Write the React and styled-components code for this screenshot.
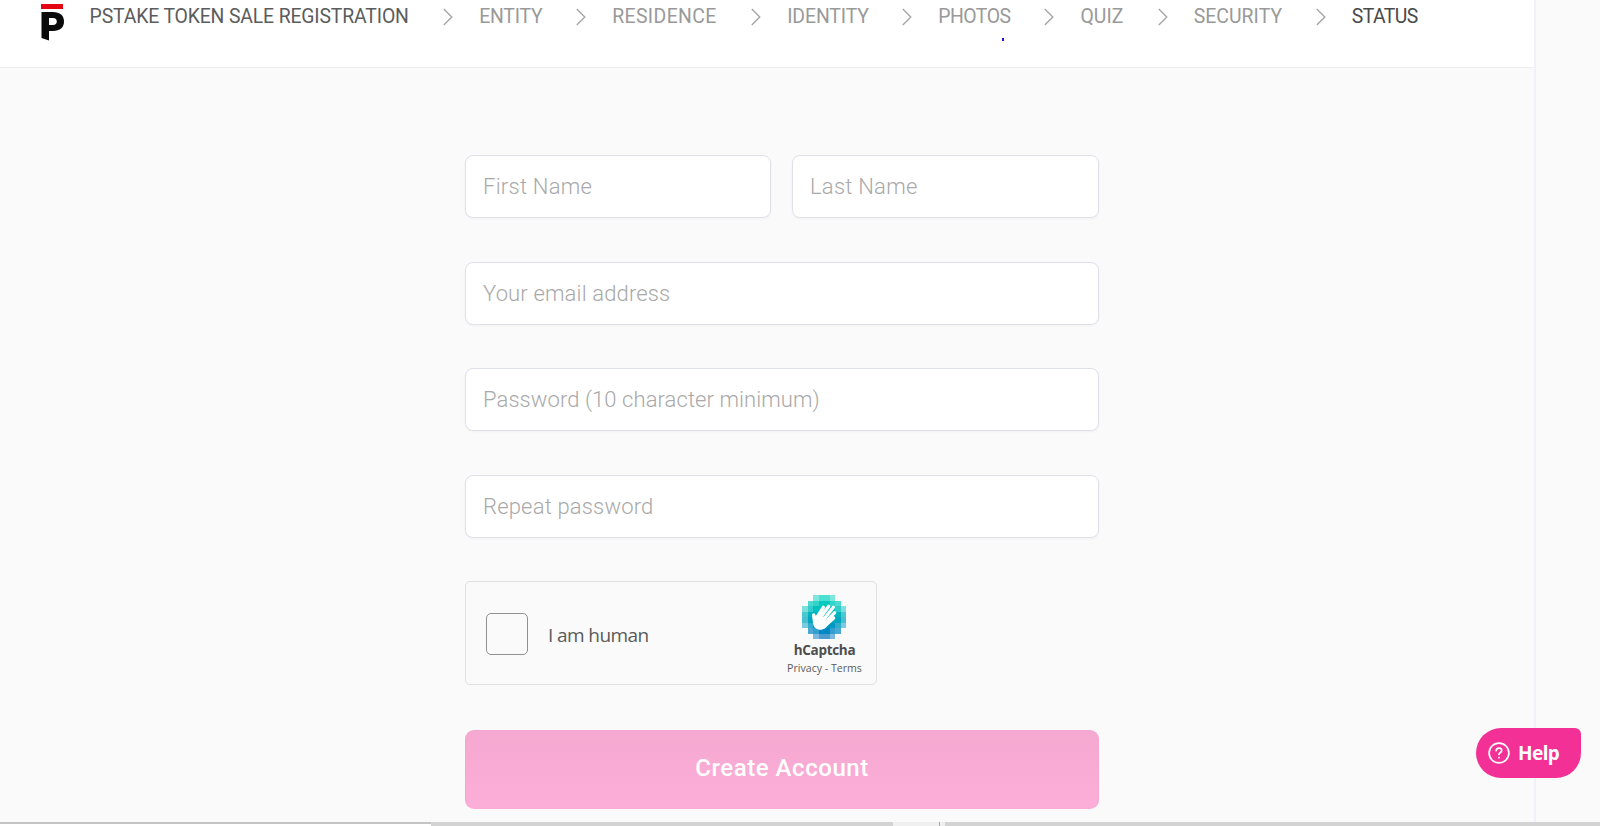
import styled, { createGlobalStyle } from 'styled-components'

const GlobalStyle = createGlobalStyle`
  * {
    box-sizing: border-box;
  }

  body {
    margin: 0;
    background-color: #fafafa;
    font-family: Roboto, 'Liberation Sans', sans-serif;
    overflow: hidden;
  }
`

const PageStyled = styled('div')`
  position: relative;
  display: flex;
  flex-direction: column;
  width: 1600px;
  height: 826px;
  overflow: hidden;
`

const ContentStyled = styled('div')`
  flex: 1;
  width: 1536px;
  min-height: 0;
  border-right: 2px solid #f1f1f9;
`

const HeaderStyled = styled('header')`
  position: relative;
  display: flex;
  align-items: flex-start;
  height: 68px;
  padding-left: 41px;
  background-color: #fff;
  border-bottom: 1px solid #eee;
`

const LogoStyled = styled('svg')`
  flex: none;
  width: 24px;
  height: 37px;
  margin: 4px 24.6px 0 0;
`

const StepListStyled = styled('ol')`
  display: flex;
  margin: 0;
  padding: 0;
  list-style: none;
`

const StepStyled = styled('li')`
  display: flex;
  align-items: center;
  height: 32px;
  width: ${({ $width }) => $width}px;
  color: ${({ $color }) => $color || '#999'};
  font-size: 19.4px;
  letter-spacing: ${({ $spacing }) => $spacing || 0}px;
  white-space: nowrap;

  & svg {
    flex: none;
    width: 10px;
    height: 18px;
    margin: 2px 26px 0 auto;
  }
`

const CursorDotStyled = styled('i')`
  position: absolute;
  left: 1002px;
  top: 38px;
  width: 2px;
  height: 3px;
  background-color: #2010e8;
`

const FormStyled = styled('form')`
  display: flex;
  flex-direction: column;
  width: 634px;
  margin: 87px 0 0 465px;
`

const RowStyled = styled('div')`
  display: flex;
  gap: 21px;
  margin-bottom: ${({ $gap }) => $gap || 43}px;
`

const InputStyled = styled('input')`
  flex: ${({ $width }) => ($width ? `0 0 ${$width}px` : 1)};
  min-width: 0;
  height: 63px;
  padding: 0 17px;
  border: 1px solid #dfe1ea;
  border-radius: 8px;
  background-color: #fff;
  box-shadow: 0 1px 3px rgba(0, 0, 0, 0.04);
  font-family: inherit;
  font-size: 22px;
  font-weight: 300;
  letter-spacing: ${({ $spacing }) => $spacing || 0.15}px;
  outline: none;

  &::placeholder {
    color: #a9a9a9;
    opacity: 1;
  }
`

const CaptchaStyled = styled('div')`
  display: flex;
  align-items: center;
  width: 412px;
  height: 104px;
  padding: 1px 13px 0 20px;
  border: 1px solid #e0e0e0;
  border-radius: 5px;
  background-color: #fafafa;
  color: #5a5a5a;
  font-family: 'Open Sans', 'Noto Sans', sans-serif;
`

const CheckboxStyled = styled('span')`
  width: 42px;
  height: 42px;
  margin-right: 20px;
  border: 1px solid #919191;
  border-radius: 5px;
`

const CaptchaLabelStyled = styled('span')`
  padding-top: 2px;
  font-size: 19px;
  letter-spacing: -0.6px;
`

const BrandStyled = styled('div')`
  display: flex;
  flex-direction: column;
  align-items: center;
  width: 77px;
  margin-left: auto;
  padding-top: 2px;

  & svg {
    width: 44px;
    height: 44px;
    margin-right: 1px;
  }

  & strong {
    color: #4d4d4d;
    font-size: 13.5px;
    line-height: 22px;
    letter-spacing: -0.3px;
  }

  & small {
    font-size: 10.6px;
    line-height: 14px;
    white-space: nowrap;
  }
`

const SubmitStyled = styled('button')`
  height: 79px;
  margin-top: 45px;
  padding: 0 0 3px;
  border: 1px solid #f4a6d0;
  border-bottom-color: #fbadd7;
  border-radius: 9px;
  background: linear-gradient(#f5a8d0, #fcaed8);
  color: #fff;
  font-family: inherit;
  font-size: 24px;
  font-weight: 500;
  letter-spacing: 0.55px;
`

const HelpStyled = styled('button')`
  position: absolute;
  left: 1476px;
  top: 728px;
  display: flex;
  align-items: center;
  gap: 8px;
  width: 105px;
  height: 50px;
  padding: 0 0 0 12px;
  border: 0;
  border-radius: 25px 6px 25px 25px;
  background-color: #f23096;
  color: #fff;
  font-family: 'Noto Sans', sans-serif;
  font-size: 19px;
  font-weight: 700;
  letter-spacing: -0.6px;
`

const ScrollbarStyled = styled('div')`
  display: flex;
  height: 4px;
  background-color: #d3d3d3;
`

const TrackStyled = styled('span')`
  width: ${({ $width }) => $width}px;
  border-top: ${({ $edge }) => ($edge ? `2px solid ${$edge}` : 0)};
  background-color: ${({ $color }) => $color};
`

const steps = [
  { name: 'PSTAKE TOKEN SALE REGISTRATION', width: 389.6, color: '#5c5c5c', spacing: -0.15 },
  { name: 'ENTITY', width: 133, spacing: -0.2 },
  { name: 'RESIDENCE', width: 175, spacing: 0.4 },
  { name: 'IDENTITY', width: 151, spacing: -0.1 },
  { name: 'PHOTOS', width: 142.3, spacing: -0.5 },
  { name: 'QUIZ', width: 113.2, spacing: 0 },
  { name: 'SECURITY', width: 158.2, spacing: 0.05 },
  { name: 'STATUS', width: 80, color: '#4a4a4a', spacing: -0.6 }
]

const Logo = () => (
  <LogoStyled viewBox='0 0 24 37'>
    <path d='M0 0h22v5H0z' fill='#e30613' />
    <path d='M.5 8H12C19 8 23 11.500 23 17.500S19 27 12 27H8v9.500L.5 34zM8 14v7h4c2.500 0 3.800-1.200 3.800-3.500S14.500 14 12 14z' fill='#0a0a0a' fillRule='evenodd' />
  </LogoStyled>
)

const Chevron = () => (
  <svg viewBox='0 0 10 18' fill='none' stroke='#a3a3a3' strokeWidth='1.3'>
    <path d='M.8 1l8 8-8 8' />
  </svg>
)

// opacity of each tile of the badge, 0 leaves the corner empty
const tiles = [
  [0, 0, 0.5, 0.7, 0.7, 0.5, 0, 0],
  [0, 0.7, 0.8, 1, 1, 0.8, 0.7, 0],
  [0.5, 0.8, 1, 1, 1, 1, 0.8, 0.5],
  [0.7, 1, 1, 1, 1, 1, 1, 0.7],
  [0.7, 1, 1, 1, 1, 1, 1, 0.7],
  [0.5, 0.8, 1, 1, 1, 1, 0.8, 0.5],
  [0, 0.7, 0.8, 1, 1, 0.8, 0.7, 0],
  [0, 0, 0.5, 0.7, 0.7, 0.5, 0, 0]
]
const tileColors = ['#00d4bf', '#00cbbd', '#00c1be', '#00b3bf', '#00a5c0', '#0098c2', '#0088c4', '#0074bf']

const HandBadge = () => (
  <svg viewBox='0 0 132 132'>
    <g shapeRendering='crispEdges'>
      {tiles.map((row, y) =>
        row.map((opacity, x) =>
          opacity ? (
            <rect key={`${x}-${y}`} x={x * 16.5} y={y * 16.5} width='16.5' height='16.5' fill={tileColors[y]} opacity={opacity} />
          ) : null
        )
      )}
    </g>
    <g fill='none' stroke='#fff' strokeWidth='10' strokeLinecap='round'>
      <path d='M46 65l18-28M56 67l24-33M66 72l28-35M73 79l25-26M74 88l21-19' />
      <path d='M35 60c4 8 5 15 8 24' />
    </g>
    <path d='M42 68c3-3 7-11 12-13l26 27c-3 13-11 21-21 22-15 1-25-7-26-21l-3-21c5-3 9 0 12 6z' fill='#fff' />
  </svg>
)

const App = () => {
  return (
    <PageStyled>
      <GlobalStyle />
      <ContentStyled>
        <HeaderStyled>
          <Logo />
          <StepListStyled>
            {steps.map(({ name, width, color, spacing }, i) => (
              <StepStyled key={name} $width={width} $color={color} $spacing={spacing}>
                {name}
                {i < steps.length - 1 && <Chevron />}
              </StepStyled>
            ))}
          </StepListStyled>
          <CursorDotStyled />
        </HeaderStyled>
        <FormStyled>
          <RowStyled $gap={44}>
            <InputStyled placeholder='First Name' $width={306} $spacing={0.25} />
            <InputStyled placeholder='Last Name' $spacing={0.25} />
          </RowStyled>
          <RowStyled>
            <InputStyled placeholder='Your email address' $spacing={0.15} />
          </RowStyled>
          <RowStyled $gap={44}>
            <InputStyled placeholder='Password (10 character minimum)' $spacing={0.08} />
          </RowStyled>
          <RowStyled>
            <InputStyled placeholder='Repeat password' $spacing={0.18} />
          </RowStyled>
          <CaptchaStyled>
            <CheckboxStyled />
            <CaptchaLabelStyled>I am human</CaptchaLabelStyled>
            <BrandStyled>
              <HandBadge />
              <strong>hCaptcha</strong>
              <small>Privacy - Terms</small>
            </BrandStyled>
          </CaptchaStyled>
          <SubmitStyled type='button'>Create Account</SubmitStyled>
        </FormStyled>
      </ContentStyled>
      <ScrollbarStyled>
        <TrackStyled $width={431} $color='#fff' $edge='#c4c4c4' />
        <TrackStyled $width={462} $color='#d3d3d3' />
        <TrackStyled $width={46} $color='#f0f0f0' />
        <TrackStyled $width={1} $color='#aaa' />
        <TrackStyled $width={5} $color='#eee' />
      </ScrollbarStyled>
      <HelpStyled>
        <svg width='22' height='22' viewBox='0 0 22 22' fill='none' stroke='#fff' strokeWidth='1.7' strokeLinecap='round'>
          <circle cx='11' cy='11' r='9.900' />
          <path d='M8.200 8.700c.1-1.700 1.200-2.500 2.800-2.500s2.700.9 2.700 2.300c0 2-2.500 2-2.700 4M11 15.500v.2' />
        </svg>
        Help
      </HelpStyled>
    </PageStyled>
  )
}

export default App
